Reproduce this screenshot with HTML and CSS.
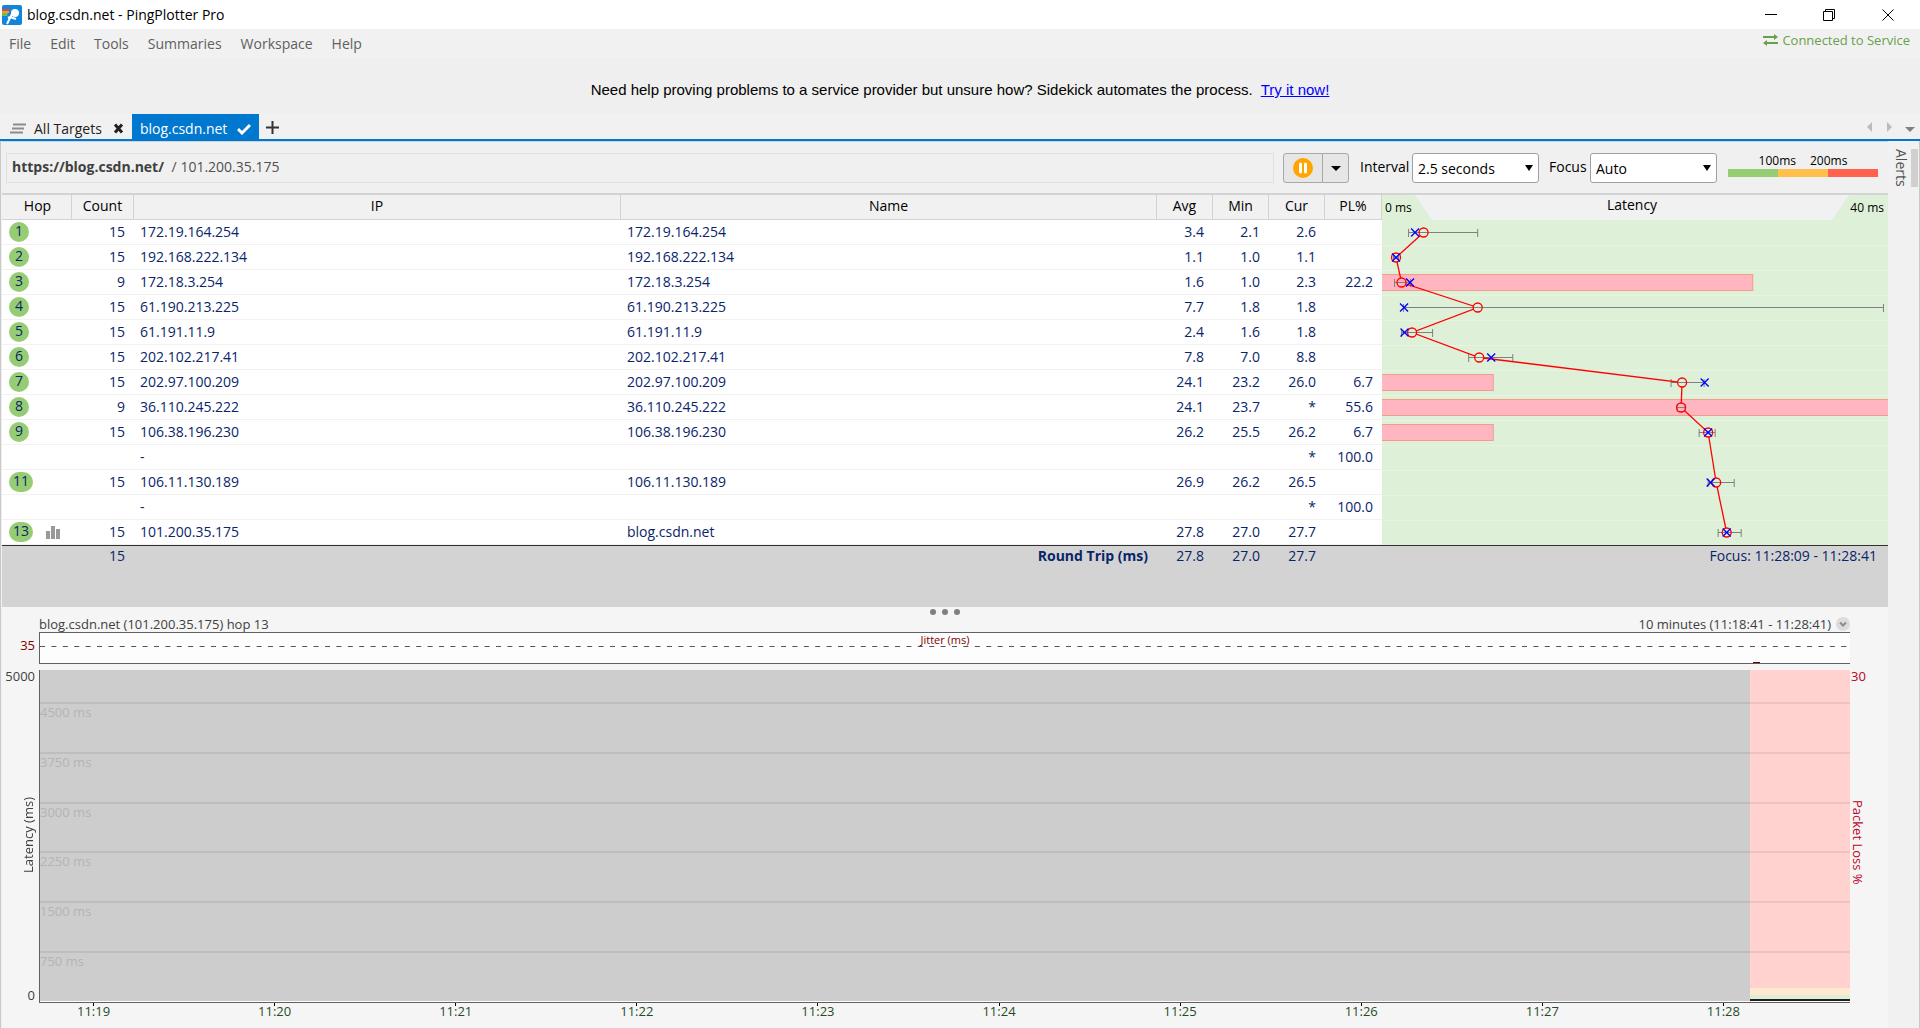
FILE: index.html
```html
<!DOCTYPE html>
<html lang="en">
<head>
<meta charset="utf-8">
<title>blog.csdn.net - PingPlotter Pro</title>
<link rel="stylesheet" href="styles.css">
</head>
<body>
<header class="titlebar">
  <svg class="logo" width="20" height="20" viewBox="0 0 20 20" aria-hidden="true">
    <rect width="20" height="20" rx="2" fill="#0f86dc"/>
    <path d="M0 4h8l-1 2H0z" fill="#e0483c"/>
    <path d="M0 6h7v2H0z" fill="#f39a2b"/>
    <path d="M0 8h6l-1 3H0z" fill="#6abf4b"/>
    <circle cx="13" cy="8" r="4" fill="#fff"/>
    <path d="M10 9L5 19M6 13l2-1 6 2" stroke="#fff" stroke-width="2" fill="none"/>
  </svg>
  <h1 class="titlebar-text">blog.csdn.net - PingPlotter Pro</h1>
  <div class="window-controls">
    <button type="button" aria-label="Minimize"><svg width="12" height="12" viewBox="0 0 12 12"><path d="M0 5.500h12" stroke="#000"/></svg></button>
    <button type="button" aria-label="Restore"><svg width="12" height="12" viewBox="0 0 12 12" fill="none" stroke="#000"><path d="M.5 2.500h9v9h-9zM2.500 2.500v-2h9v9h-2"/></svg></button>
    <button type="button" aria-label="Close"><svg width="12" height="12" viewBox="0 0 12 12"><path d="M.5.5l11 11M11.500.5l-11 11" stroke="#000"/></svg></button>
  </div>
</header>

<nav class="menubar">
  <a href="#">File</a><a href="#">Edit</a><a href="#">Tools</a><a href="#">Summaries</a><a href="#">Workspace</a><a href="#">Help</a>
  <span class="service">
    <svg width="15" height="12" viewBox="0 0 15 12" aria-hidden="true"><path d="M0 3h12M3 9h12" stroke="#6a9f4b" stroke-width="2"/><path d="M11 0l4 3-4 3zM4 6L0 9l4 3z" fill="#6a9f4b"/></svg>
    Connected to Service
  </span>
</nav>

<p class="banner">Need help proving problems to a service provider but unsure how? Sidekick automates the process.&nbsp; <a href="#">Try it now!</a></p>

<nav class="tabs">
  <button type="button" class="tab tab-all">
    <svg width="16" height="12" viewBox="0 0 16 12" aria-hidden="true"><path d="M3 1.500h13M2 5.500h12M0 9.500h13" stroke="#8c8c8c" stroke-width="2"/></svg>
    All Targets
    <svg class="tab-close" width="11" height="11" viewBox="0 0 11 11" aria-hidden="true"><path d="M2 1.500l7 8M9 1.500l-7 8" stroke="#222" stroke-width="3"/></svg>
  </button>
  <button type="button" class="tab tab-active">
    blog.csdn.net
    <svg width="14" height="12" viewBox="0 0 14 12" aria-hidden="true"><path d="M1 6l4 4 8-8" fill="none" stroke="#fff" stroke-width="3"/></svg>
  </button>
  <button type="button" class="tab tab-add" aria-label="New tab"><svg width="13" height="13" viewBox="0 0 13 13"><path d="M0 6.500h13M6.500 0v13" stroke="#333" stroke-width="2"/></svg></button>
  <div class="tab-scroll">
    <button type="button" aria-label="Scroll left"><svg width="6" height="10" viewBox="0 0 6 10"><path d="M5 0v10L0 5z" fill="#bbb"/></svg></button>
    <button type="button" aria-label="Scroll right"><svg width="6" height="10" viewBox="0 0 6 10"><path d="M1 0v10l5-5z" fill="#bbb"/></svg></button>
    <button type="button" aria-label="Tab list"><svg width="10" height="10" viewBox="0 0 10 10"><path d="M0 5h10L5 10z" fill="#808080"/></svg></button>
  </div>
</nav>

<div class="workspace">
<main class="main">
  <div class="toolbar">
    <div class="target"><strong>https://blog.csdn.net/</strong> / 101.200.35.175</div>
    <div class="pause">
      <button type="button" aria-label="Pause"><svg width="20" height="20" viewBox="0 0 20 20"><circle cx="10" cy="10" r="10" fill="#ffa500"/><path d="M7.500 6v8M12.500 6v8" stroke="#fff" stroke-width="3" stroke-linecap="round"/></svg></button>
      <button type="button" aria-label="Pause options"><svg width="10" height="5" viewBox="0 0 10 5"><path d="M0 0h10L5 5z"/></svg></button>
    </div>
    <label for="interval">Interval</label>
    <div class="combo"><select id="interval"><option>2.5 seconds</option></select></div>
    <label class="label-focus" for="focus">Focus</label>
    <div class="combo"><select id="focus"><option>Auto</option></select></div>
    <div class="legend">
      <div class="legend-text"><span>100ms</span><span>200ms</span></div>
      <div class="legend-bar"><i class="good"></i><i class="warn"></i><i class="bad"></i></div>
    </div>
  </div>

  <table class="hops">
    <colgroup><col class="c-hop"><col class="c-count"><col class="c-ip"><col class="c-name"><col class="c-num"><col class="c-num"><col class="c-num"><col class="c-pl"><col class="c-lat"></colgroup>
    <thead>
      <tr><th class="th-hop">Hop</th><th>Count</th><th class="th-ip">IP</th><th>Name</th><th>Avg</th><th>Min</th><th>Cur</th><th>PL%</th>
      <th class="lat-head"><div><span class="scale-min">0 ms</span><span>Latency</span><span class="scale-max">40 ms</span></div></th></tr>
    </thead>
    <tbody>
      <tr><td><b class="hop">1</b></td><td class="n">15</td><td>172.19.164.254</td><td>172.19.164.254</td><td class="n">3.4</td><td class="n">2.1</td><td class="n">2.6</td><td class="n"></td>
      <td class="lat" rowspan="13">
        <svg width="100%" height="325" viewBox="0 0 505 325" preserveAspectRatio="none" role="img" aria-label="Latency by hop">
          <defs>
            <path id="x" d="M-4-4l8 8M4-4l-8 8"/>
            <circle id="o" r="4.500"/>
            <mask id="gap" maskUnits="userSpaceOnUse" x="0" y="0" width="505" height="325">
              <rect width="505" height="325" fill="#fff"/>
              <g fill="#000"><use href="#o" x="41.500" y="12.500"/><use href="#o" x="14" y="37.500"/><use href="#o" x="19.500" y="62.500"/><use href="#o" x="95.500" y="87.500"/><use href="#o" x="30" y="112.500"/><use href="#o" x="97" y="137.500"/><use href="#o" x="299.500" y="162.500"/><use href="#o" x="298.500" y="187.500"/><use href="#o" x="325.500" y="212.500"/><use href="#o" x="333.500" y="262.500"/><use href="#o" x="344" y="312.500"/></g>
            </mask>
          </defs>
          <path d="M0 25.500h505M0 50.500h505M0 75.500h505M0 100.500h505M0 125.500h505M0 150.500h505M0 175.500h505M0 200.500h505M0 225.500h505M0 250.500h505M0 275.500h505M0 300.500h505" stroke="#e8f4e3"/>
          <g fill="#ffb6c1" stroke="#f39c86"><path d="M-1 54.500h371v16H-1zM-1 154.500h112v16H-1zM-1 179.500h508v16H-1zM-1 204.500h112v16H-1z"/></g>
          <path stroke="#808080" fill="none" d="M26.500 9v8M95.500 9v8M26.500 12.500h69M11.500 34v8M16.500 34v8M11.500 37.500h5M12.500 59v8M28.500 59v8M12.500 62.500h16M21.500 84v8M500.500 84v8M21.500 87.500h479M19.500 109v8M50.500 109v8M19.500 112.500h31M86.500 134v8M130.500 134v8M86.500 137.500h44M288.500 159v8M321.500 159v8M288.500 162.500h33M294.500 184v8M302.500 184v8M294.500 187.500h8M316.500 209v8M332.500 209v8M316.500 212.500h16M325.500 259v8M351.500 259v8M325.500 262.500h26M335.500 309v8M358.500 309v8M335.500 312.500h23"/>
          <path mask="url(#gap)" stroke="#f00" fill="none" stroke-width="1.300" d="M41.500 12.500L14 37.500l5.500 25 76 25-65.500 25 67 25 202.500 25-1 25 27 25 8 50 10.500 50"/>
          <g stroke="#f00" stroke-width="1.300" fill="none"><use href="#o" x="41.500" y="12.500"/><use href="#o" x="14" y="37.500"/><use href="#o" x="19.500" y="62.500"/><use href="#o" x="95.500" y="87.500"/><use href="#o" x="30" y="112.500"/><use href="#o" x="97" y="137.500"/><use href="#o" x="299.500" y="162.500"/><use href="#o" x="298.500" y="187.500"/><use href="#o" x="325.500" y="212.500"/><use href="#o" x="333.500" y="262.500"/><use href="#o" x="344" y="312.500"/></g>
          <g stroke="#00f" stroke-width="1.300"><use href="#x" x="33" y="12.500"/><use href="#x" x="14" y="37.500"/><use href="#x" x="28" y="62.500"/><use href="#x" x="22" y="87.500"/><use href="#x" x="22.500" y="112.500"/><use href="#x" x="109" y="137.500"/><use href="#x" x="322" y="162.500"/><use href="#x" x="325.500" y="212.500"/><use href="#x" x="328" y="262.500"/><use href="#x" x="344" y="312.500"/></g>
        </svg>
      </td></tr>
      <tr><td><b class="hop">2</b></td><td class="n">15</td><td>192.168.222.134</td><td>192.168.222.134</td><td class="n">1.1</td><td class="n">1.0</td><td class="n">1.1</td><td class="n"></td></tr>
      <tr><td><b class="hop">3</b></td><td class="n">9</td><td>172.18.3.254</td><td>172.18.3.254</td><td class="n">1.6</td><td class="n">1.0</td><td class="n">2.3</td><td class="n">22.2</td></tr>
      <tr><td><b class="hop">4</b></td><td class="n">15</td><td>61.190.213.225</td><td>61.190.213.225</td><td class="n">7.7</td><td class="n">1.8</td><td class="n">1.8</td><td class="n"></td></tr>
      <tr><td><b class="hop">5</b></td><td class="n">15</td><td>61.191.11.9</td><td>61.191.11.9</td><td class="n">2.4</td><td class="n">1.6</td><td class="n">1.8</td><td class="n"></td></tr>
      <tr><td><b class="hop">6</b></td><td class="n">15</td><td>202.102.217.41</td><td>202.102.217.41</td><td class="n">7.8</td><td class="n">7.0</td><td class="n">8.8</td><td class="n"></td></tr>
      <tr><td><b class="hop">7</b></td><td class="n">15</td><td>202.97.100.209</td><td>202.97.100.209</td><td class="n">24.1</td><td class="n">23.2</td><td class="n">26.0</td><td class="n">6.7</td></tr>
      <tr><td><b class="hop">8</b></td><td class="n">9</td><td>36.110.245.222</td><td>36.110.245.222</td><td class="n">24.1</td><td class="n">23.7</td><td class="n">*</td><td class="n">55.6</td></tr>
      <tr><td><b class="hop">9</b></td><td class="n">15</td><td>106.38.196.230</td><td>106.38.196.230</td><td class="n">26.2</td><td class="n">25.5</td><td class="n">26.2</td><td class="n">6.7</td></tr>
      <tr><td></td><td class="n"></td><td>-</td><td></td><td class="n"></td><td class="n"></td><td class="n">*</td><td class="n">100.0</td></tr>
      <tr><td><b class="hop hop-wide">11</b></td><td class="n">15</td><td>106.11.130.189</td><td>106.11.130.189</td><td class="n">26.9</td><td class="n">26.2</td><td class="n">26.5</td><td class="n"></td></tr>
      <tr><td></td><td class="n"></td><td>-</td><td></td><td class="n"></td><td class="n"></td><td class="n">*</td><td class="n">100.0</td></tr>
      <tr><td><div class="hop-cell"><b class="hop hop-wide">13</b><svg width="15" height="14" viewBox="0 0 15 14" aria-hidden="true"><path d="M0 6h4v8H0zM5 1h4v13H5zM10 4h4v10h-4z" fill="#999"/></svg></div></td><td class="n">15</td><td>101.200.35.175</td><td>blog.csdn.net</td><td class="n">27.8</td><td class="n">27.0</td><td class="n">27.7</td><td class="n"></td></tr>
    </tbody>
    <tfoot>
      <tr><td></td><td class="n">15</td><td></td><td class="n round-trip">Round Trip (ms)</td><td class="n">27.8</td><td class="n">27.0</td><td class="n">27.7</td><td></td><td class="n focus-range">Focus: 11:28:09 - 11:28:41</td></tr>
    </tfoot>
  </table>

  <section class="timeline">
    <div class="grip"><i></i><i></i><i></i></div>
    <div class="timeline-head">
      <span>blog.csdn.net (101.200.35.175) hop 13</span>
      <button type="button">10 minutes (11:18:41 - 11:28:41)
        <svg width="14" height="14" viewBox="0 0 14 14" aria-hidden="true"><circle cx="7" cy="7" r="7" fill="#dcdcdc"/><path d="M4 5.500l3 3 3-3" fill="none" stroke="#8c8c8c" stroke-width="2"/></svg>
      </button>
    </div>
    <div class="jitter-scale">35</div>
    <div class="jitter">
      <span class="jitter-title">Jitter (ms)</span>
      <svg width="100%" height="1" aria-hidden="true"><line x1="0" y1="0" x2="100%" y2="0" stroke="#555" stroke-width="2" stroke-dasharray="5 6.400"/></svg>
      <i class="jitter-mark"></i>
    </div>
    <div class="left-axis"><span>5000</span><span class="axis-title">Latency (ms)</span><span>0</span></div>
    <div class="plot">
      <div class="bands"><div class="band first"></div><div class="band">4500 ms</div><div class="band">3750 ms</div><div class="band">3000 ms</div><div class="band">2250 ms</div><div class="band">1500 ms</div><div class="band">750 ms</div></div>
      <div class="recent"><i class="recent-warn"></i><i class="recent-good"></i></div>
    </div>
    <div class="right-axis"><span>30</span><span class="axis-title">Packet Loss %</span></div>
    <div class="times"><span>11:19</span><span>11:20</span><span>11:21</span><span>11:22</span><span>11:23</span><span>11:24</span><span>11:25</span><span>11:26</span><span>11:27</span><span>11:28</span></div>
  </section>
</main>
<aside class="side"><button type="button">Alerts</button><i></i></aside>
</div>
</body>
</html>
```
FILE: styles.css
```css
* { box-sizing: border-box; }

body {
  margin: 0;
  min-height: 100vh;
  display: flex;
  flex-direction: column;
  background: #f1f1f1;
  color: #000;
  font: 14px/20px "Open Sans", "Noto Sans", sans-serif;
}

button {
  margin: 0;
  padding: 0;
  border: 0;
  background: none;
  color: inherit;
  font: inherit;
}

svg { display: block; flex: none; }

/* Title bar */
.titlebar {
  display: flex;
  align-items: center;
  height: 29px;
  padding: 0 2px;
  background: #fff;
}
.titlebar-text { flex: 1; margin: 0 0 0 5px; font-size: 14px; font-weight: 400; }
.window-controls { display: flex; }
.window-controls button { display: grid; place-items: center; width: 58px; height: 29px; }
.window-controls button:last-child { width: 60px; }

/* Menu */
.menubar {
  display: flex;
  align-items: center;
  gap: 19px;
  height: 29px;
  padding: 0 10px 0 9px;
  color: #606060;
}
.menubar a { color: inherit; text-decoration: none; }
.service {
  display: flex;
  align-items: center;
  gap: 4px;
  height: 22px;
  margin: 0 0 7px auto;
  color: #6a9f4b;
  font-size: 13px;
}

.banner {
  margin: 0;
  padding: 22px 0 14px;
  background: #efefef;
  font: 15px/20px "Liberation Sans", sans-serif;
  text-align: center;
}
.banner a { color: #00f; }

/* Tabs */
.tabs {
  display: flex;
  height: 27px;
  border-bottom: 2px solid #0078d0;
}
.tab { display: flex; align-items: center; }
.tab-all { gap: 8px; padding: 4px 8px 0 10px; color: #222; }
.tab-close { margin-left: 3px; }
.tab-active { gap: 10px; padding: 4px 8px 0; background: #0078d0; color: #fff; }
.tab-add { padding: 2px 0 0 7px; }
.tab-scroll { display: flex; align-items: center; gap: 13px; margin-left: auto; padding-right: 5px; }

/* Workspace */
.workspace {
  flex: 1;
  display: flex;
  padding: 0 1px;
  border-left: 1px solid #c8c8c8;
  border-right: 1px solid #c8c8c8;
}
.main { flex: 1; min-width: 0; display: flex; flex-direction: column; background: #f0f0f0; }

.toolbar {
  display: flex;
  align-items: center;
  height: 52px;
  padding: 1px 10px 0 4px;
  border-top: 1px solid #ccd5dc;
}
.target {
  flex: 1;
  height: 30px;
  margin-right: 9px;
  padding: 3px 5px;
  border: 1px solid #e0e0e0;
  color: #505050;
}
.target strong { margin-right: 4px; color: #404040; }
.pause {
  display: flex;
  height: 30px;
  margin-right: 11px;
  border: 1px solid #a8a8a8;
  border-radius: 3px;
  background: #e6e6e6;
}
.pause button { display: grid; place-items: center; width: 38px; }
.pause button + button { width: 26px; border-left: 1px solid #a8a8a8; }
.toolbar label { width: 52px; padding-bottom: 2px; }
.toolbar .label-focus { width: 41px; margin-left: 10px; }
.combo {
  display: grid;
  align-items: center;
  width: 127px;
  height: 30px;
}
.combo select, .combo::after { grid-area: 1 / 1; }
.combo::after {
  content: "";
  justify-self: end;
  margin-right: 6px;
  border: 4px solid transparent;
  border-top: 6px solid #000;
  border-bottom: 0;
  pointer-events: none;
}
.combo select {
  appearance: none;
  width: 100%;
  height: 30px;
  padding: 2px 5px 0;
  border: 1px solid #a0a0a0;
  border-radius: 3px;
  background: #fff;
  color: #000;
  font: inherit;
}
.legend { width: 150px; margin-left: 11px; padding-bottom: 7px; font-size: 12px; line-height: 16px; }
.legend-text { display: flex; justify-content: center; gap: 14px; }
.legend-bar { display: flex; height: 8px; }
.legend-bar i { flex: 1; }
.good { background: #96cd74; }
.warn { background: #ffc04d; }
.bad { background: #ff634d; }

/* Hop table */
.hops { width: 100%; table-layout: fixed; border-collapse: separate; border-spacing: 0; color: #0a246a; }
.c-hop { width: 70px; }
.c-count { width: 62px; }
.c-name { width: 536px; }
.c-num { width: 56px; }
.c-pl { width: 57px; }
.c-lat { width: 506px; }
.hops th {
  height: 27px;
  padding: 0 0 3px;
  border: solid #d3d3d3;
  border-width: 2px 1px 1px 0;
  background: #f1f1f1;
  color: #000;
  font-weight: 400;
}
.hops .th-hop { padding-left: 2px; }
.hops .lat-head { padding: 0; border-width: 2px 0 0; background: #f1f1f1; }
.lat-head div { display: grid; grid-template-columns: 50px 1fr 56px; height: 25px; }
.scale-min, .scale-max { padding-top: 3px; background: #dff0d8; font-size: 12px; }
.scale-min { padding-left: 3px; text-align: left; clip-path: polygon(0 0, 33px 0, 100% 100%, 0 100%); }
.scale-max { padding-right: 4px; text-align: right; clip-path: polygon(17px 0, 100% 0, 100% 100%, 0 100%); }
.hops tbody td { height: 25px; padding: 0 6px; border-bottom: 1px solid #f2f2f2; background: #fff; }
.hops td:first-child { padding-left: 7px; }
.hops .n { padding-right: 9px; text-align: right; }
.hops tbody .lat { padding: 0; border: 0; background: #dff0d8; }
.hop {
  display: block;
  width: 20px;
  height: 20px;
  border-radius: 10px;
  background: #96cd74;
  font-weight: 400;
  line-height: 18px;
  text-align: center;
}
.hop-wide { width: 24px; }
.hop-cell { display: flex; align-items: center; gap: 13px; }
.hops tfoot td { height: 62px; padding: 0 6px; border-top: 1px solid #303030; background: #d3d3d3; vertical-align: top; }
.hops .focus-range { padding-right: 11px; }
.round-trip { font-weight: 700; }

/* Timeline */
.timeline {
  flex: 1;
  display: grid;
  grid-template: 10px 15px 32px 6px minmax(240px, 1fr) 25px / 37px 1fr 38px;
  background: #f5f5f5;
  color: #404040;
  font-size: 13px;
}
.grip { grid-area: 1 / 1 / 2 / 4; display: flex; justify-content: center; align-items: center; gap: 6px; }
.grip i { width: 6px; height: 6px; border-radius: 50%; background: #808080; }
.timeline-head { grid-area: 2 / 2; display: flex; justify-content: space-between; line-height: 14px; }
.timeline-head button { display: flex; gap: 5px; }
.jitter-scale { grid-area: 3 / 1; padding: 3px 4px 0 0; color: #800000; text-align: right; }
.jitter {
  grid-area: 3 / 2;
  display: grid;
  grid-template-rows: 13px 1fr 1px;
  border: solid #606060;
  border-width: 1px 0 1px 1px;
  background: #fdfdfd;
}
.jitter-title { justify-self: center; color: #800000; font-size: 11px; line-height: 14px; }
.jitter-mark { justify-self: end; width: 7px; height: 1px; margin-right: 90px; background: #600000; }
.left-axis {
  grid-area: 5 / 1;
  display: grid;
  grid-template-rows: 12px 1fr 16px;
  justify-items: end;
  align-items: center;
  padding-right: 4px;
  line-height: 8px;
}
.axis-title { writing-mode: vertical-rl; line-height: 14px; }
.left-axis .axis-title { transform: rotate(180deg); }
.plot {
  grid-area: 5 / 2;
  display: grid;
  grid-template-columns: 1fr 100px;
  padding-bottom: 1px;
  border: solid #606060;
  border-width: 0 0 1px 1px;
  background: linear-gradient(#cdcdcd, #cdcdcd) no-repeat 0 0 / 100% calc(100% - 1px), #fff;
}
.bands { grid-area: 1 / 1 / 2 / 3; z-index: 1; display: flex; flex-direction: column; }
.band { flex: 15 0 0; border-top: 2px solid rgba(0, 0, 0, .07); color: #b4b4b4; line-height: 16px; }
.band.first { flex-grow: 10; border: 0; }
.recent { grid-area: 1 / 2; display: flex; flex-direction: column; justify-content: flex-end; background: #ffd2cf; }
.recent-warn { height: 7px; background: #ffe8cd; }
.recent-good { height: 6px; border-bottom: 2px solid #202020; background: #dcefd5; }
.right-axis {
  grid-area: 5 / 3;
  display: grid;
  grid-template-rows: 12px 1fr;
  justify-items: start;
  align-items: center;
  padding: 0 0 0 1px;
  color: #c00020;
  line-height: 12px;
}
.times {
  grid-area: 6 / 2;
  display: grid;
  grid-template-columns: repeat(10, 10%);
  width: 100%;
  margin-left: -36px;
  color: #1f4d1f;
  line-height: 14px;
  text-align: center;
}
.times span::before { content: ""; display: block; width: 1px; height: 3px; margin: 0 auto -2px; background: #000; }

/* Alerts strip */
.side { display: flex; width: 30px; padding: 8px 0 0 3px; color: #505050; }
.side button { align-self: flex-start; width: 20px; height: 40px; writing-mode: vertical-rl; line-height: 20px; text-align: left; }
.side i { width: 7px; height: 38px; background: #d0d0d0; }
```
